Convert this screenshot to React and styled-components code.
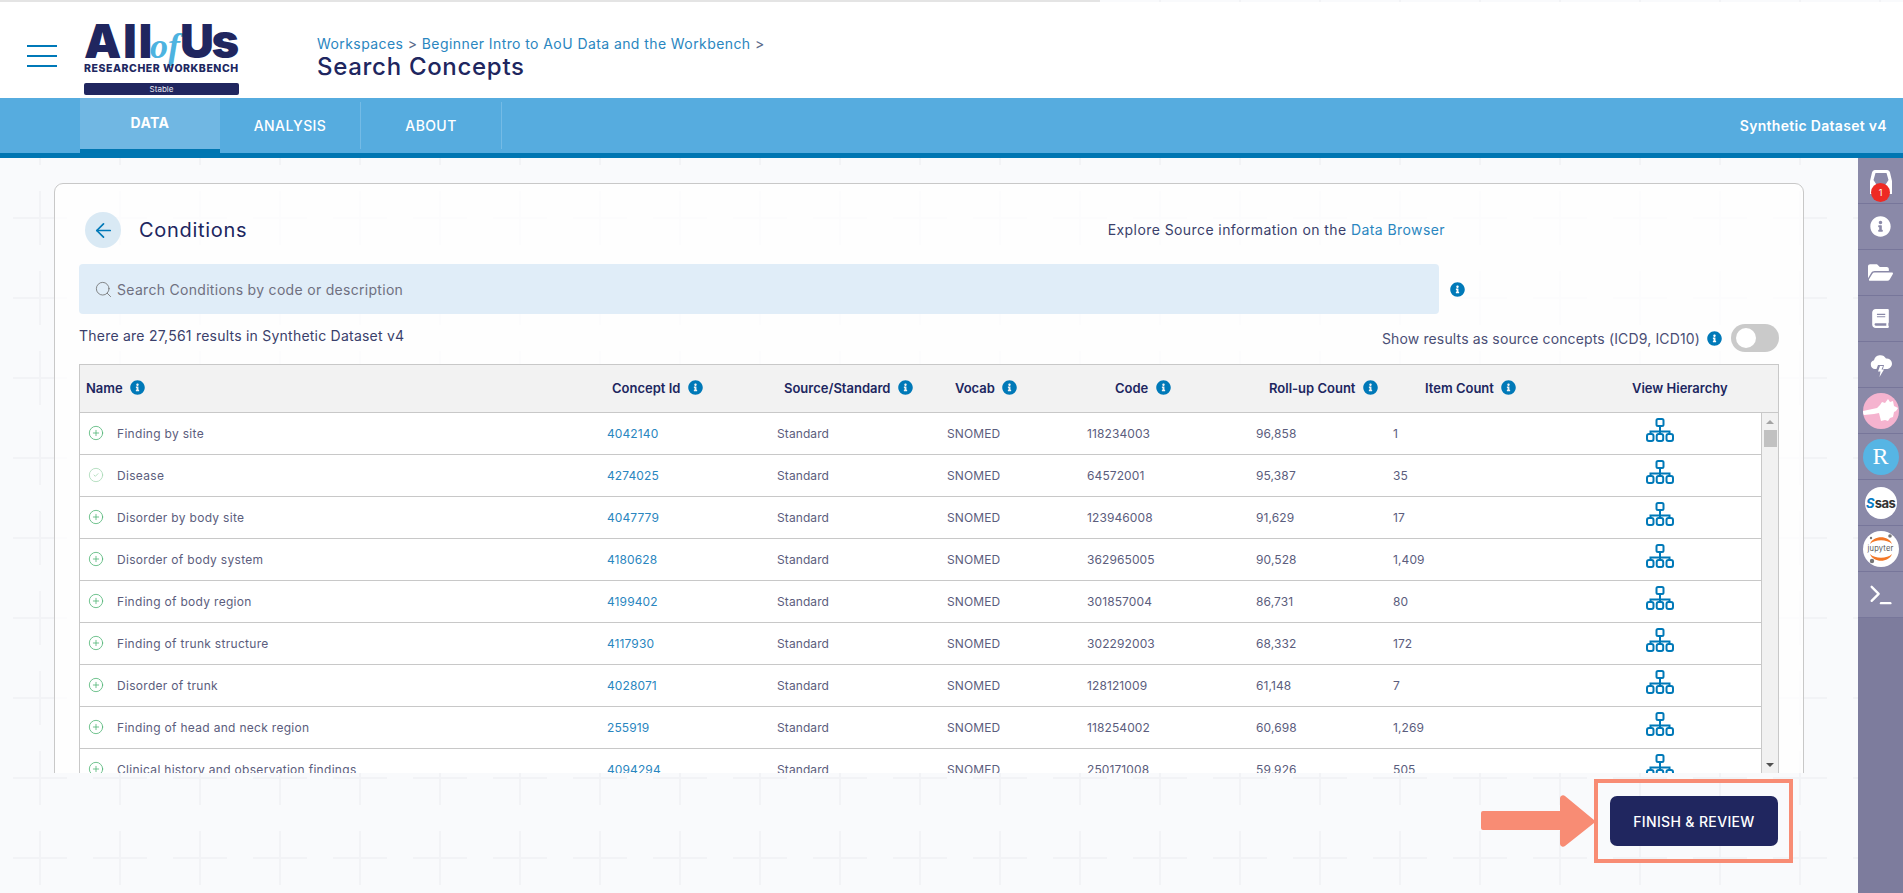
import styled, { createGlobalStyle } from "styled-components";
import { ArrowLeft, CircleCheck, CirclePlus, Search, Terminal } from "lucide-react";
import { FaBook, FaFolderOpen, FaInfoCircle } from "react-icons/fa";

const crossTile = encodeURIComponent(
  `<svg xmlns="http://www.w3.org/2000/svg" width="80" height="80"><path d="M40 13v54M13 40h54" stroke="#f2f3f6" stroke-width="2"/></svg>`
);

const rows = [
  ["Finding by site", "4042140", "118234003", "96,858", "1"],
  ["Disease", "4274025", "64572001", "95,387", "35", true],
  ["Disorder by body site", "4047779", "123946008", "91,629", "17"],
  ["Disorder of body system", "4180628", "362965005", "90,528", "1,409"],
  ["Finding of body region", "4199402", "301857004", "86,731", "80"],
  ["Finding of trunk structure", "4117930", "302292003", "68,332", "172"],
  ["Disorder of trunk", "4028071", "128121009", "61,148", "7"],
  ["Finding of head and neck region", "255919", "118254002", "60,698", "1,269"],
  ["Clinical history and observation findings", "4094294", "250171008", "59,926", "505"],
];

const columns = ["Name", "Concept Id", "Source/Standard", "Vocab", "Code", "Roll-up Count", "Item Count"];

function Hierarchy() {
  return (
    <svg width="28" height="24" viewBox="0 0 28 24" fill="none" stroke="#0079b8" strokeWidth="2">
      <rect x="10.5" y="1" width="7" height="7" rx="1.5" />
      <path d="M14 8v6M4.5 16v-2.5h19V16" />
      <path d="M14 13.5V16" />
      <rect x="1" y="16" width="6.5" height="7" rx="2" />
      <rect x="10.7" y="16" width="6.5" height="7" rx="2" />
      <rect x="20.5" y="16" width="6.5" height="7" rx="2" />
    </svg>
  );
}

function App() {
  return (
    <Page>
      <GlobalStyle />
      <TopLine />
      <Header>
        <Hamburger>
          <span />
          <span />
          <span />
        </Hamburger>
        <Logo>
          <LogoMark>
            <LogoAll>All</LogoAll>
            <LogoOf>of</LogoOf>
            <LogoUs>Us</LogoUs>
          </LogoMark>
          <LogoSub>RESEARCHER WORKBENCH</LogoSub>
          <LogoTag>Stable</LogoTag>
        </Logo>
        <Titles>
          <Breadcrumb>
            Workspaces <Sep>&gt;</Sep> Beginner Intro to AoU Data and the Workbench <Sep>&gt;</Sep>
          </Breadcrumb>
          <PageTitle>Search Concepts</PageTitle>
        </Titles>
      </Header>
      <Nav>
        <Tab $active>DATA</Tab>
        <Tab>ANALYSIS</Tab>
        <Tab>ABOUT</Tab>
        <DatasetName>Synthetic Dataset v4</DatasetName>
      </Nav>
      <Body>
        <Main>
          <CardClip>
            <Card>
              <CardTop>
                <BackButton>
                  <ArrowLeft size={23} strokeWidth={1.8} color="#0079b8" />
                </BackButton>
                <CardTitle>Conditions</CardTitle>
                <Explore>
                  Explore Source information on the <ExploreLink>Data Browser</ExploreLink>
                </Explore>
              </CardTop>
              <SearchRow>
                <SearchBox>
                  <Search size={19} strokeWidth={1} color="#6b6b6b" />
                  <SearchText>Search Conditions by code or description</SearchText>
                </SearchBox>
                <InfoIcon />
              </SearchRow>
              <ResultRow>
                <ResultText>There are 27,561 results in Synthetic Dataset v4</ResultText>
                <ToggleLabel>Show results as source concepts (ICD9, ICD10)</ToggleLabel>
                <InfoIcon />
                <Toggle>
                  <Knob />
                </Toggle>
              </ResultRow>
              <Table>
                <HeadRow>
                  {columns.map((name) => (
                    <HeadCell key={name}>
                      {name} <InfoIcon />
                    </HeadCell>
                  ))}
                  <HeadCell>View Hierarchy</HeadCell>
                </HeadRow>
                <TableBody>
                  <RowList>
                    {rows.map(([name, id, code, count, items, added]) => (
                      <Row key={id}>
                        <NameCell>
                          {added ? (
                            <CircleCheck size={16} strokeWidth={1.2} color="#a6d8b4" />
                          ) : (
                            <CirclePlus size={16} strokeWidth={1.2} color="#4eb474" />
                          )}
                          {name}
                        </NameCell>
                        <IdCell>{id}</IdCell>
                        <Cell>Standard</Cell>
                        <Cell>SNOMED</Cell>
                        <Cell>{code}</Cell>
                        <Cell>{count}</Cell>
                        <Cell>{items}</Cell>
                        <IconCell>
                          <Hierarchy />
                        </IconCell>
                      </Row>
                    ))}
                  </RowList>
                  <Scrollbar>
                    <ArrowUp />
                    <Thumb />
                    <ArrowDown />
                  </Scrollbar>
                </TableBody>
              </Table>
            </Card>
          </CardClip>
          <Footer>
            <svg width="116" height="54" viewBox="0 0 116 54">
              <path
                d="M3 17h77V4a3 3 0 0 1 5-2l29 24a2 2 0 0 1 0 3L85 52a3 3 0 0 1-5-2V36H3a2 2 0 0 1-2-2V19a2 2 0 0 1 2-2z"
                fill="#f88c74"
              />
            </svg>
            <FinishFrame>
              <FinishButton>FINISH &amp; REVIEW</FinishButton>
            </FinishFrame>
          </Footer>
        </Main>
        <Sidebar>
          <SideItem>
            <CartIcon width="22" height="26" viewBox="0 0 22 26">
              <path
                fillRule="evenodd"
                d="M5 0h12c1.500 0 2.500 1 3 2.500L22 11v13H0V11l2-8.500C2.500 1 3.500 0 5 0zm0.500 3L3.500 10 8 17h6l4.500-7-2-7z"
                fill="#fff"
              />
            </CartIcon>
            <Badge>1</Badge>
          </SideItem>
          <SideItem>
            <FaInfoCircle size={21} color="#fff" />
          </SideItem>
          <SideItem>
            <FaFolderOpen size={25} color="#fff" />
          </SideItem>
          <SideItem>
            <FaBook size={19} color="#fff" />
          </SideItem>
          <SideItem>
            <svg width="24" height="24" viewBox="0 0 24 24">
              <path
                d="M6 16a4.500 4.500 0 0 1-1-8.800A6.500 6.500 0 0 1 17 5.500a5 5 0 0 1 1.500 10.400L17 16h-3l1-4H9l-1.500 4z"
                fill="#fff"
              />
              <path d="M11 13h3l-1.500 3.500H15L10.500 24l1-5.500H9z" fill="#fff" />
            </svg>
          </SideItem>
          <SideItem>
            <AppCircle $bg="#f5b3cf" $size={36}>
              <svg width="36" height="36" viewBox="0 0 36 36">
                <path
                  d="M0 18l14-3 3-3 2-3 3 1 3-4 2 3 3-1 1 5 4 2-2 3-2 1-1 5-3 1-2 3-3-1-4 1-1-4-1-4-5 1-10 1-2-2z"
                  fill="#fff"
                />
              </svg>
            </AppCircle>
          </SideItem>
          <SideItem>
            <AppCircle $bg="#56b5e4" $size={36}>
              <RLetter>R</RLetter>
            </AppCircle>
          </SideItem>
          <SideItem>
            <AppCircle $bg="#fff" $size={32}>
              <SasMark>
                <SasS>S</SasS>sas
              </SasMark>
            </AppCircle>
          </SideItem>
          <SideItem>
            <AppCircle $bg="#fff" $size={36}>
              <svg width="36" height="36" viewBox="0 0 36 36">
                <path d="M7 13C10 4 26 4 29 13 24 8 12 8 7 13z" fill="#f37726" />
                <path d="M7 23C10 32 26 32 29 23 24 28 12 28 7 23z" fill="#f37726" />
                <circle cx="27" cy="5" r="1.8" fill="#767677" />
                <circle cx="8" cy="7" r="1.2" fill="#767677" />
                <circle cx="9" cy="30" r="2.2" fill="#767677" />
              </svg>
              <JupyterText>jupyter</JupyterText>
            </AppCircle>
          </SideItem>
          <SideItem>
            <Terminal size={28} color="#fff" strokeWidth={2} />
          </SideItem>
        </Sidebar>
      </Body>
    </Page>
  );
}

const GlobalStyle = createGlobalStyle`
  html, body {
    margin: 0;
    height: 100%;
    overflow: hidden;
    font-family: "Inter", "Liberation Sans", sans-serif;
  }
  * {
    box-sizing: border-box;
  }
`;
const Page = styled.div`
  height: 893px;
  display: flex;
  flex-direction: column;
  background-color: #f9fafc;
  background-image: url("data:image/svg+xml,${crossTile}");
  background-position: 0 18px;
`;
const TopLine = styled.div`
  width: 1100px;
  height: 2px;
  background: #e4e4e4;
`;
const Header = styled.header`
  height: 96px;
  background: white;
  display: flex;
  align-items: flex-start;
`;
const Hamburger = styled.div`
  width: 30px;
  margin: 43px 0 0 27px;
  display: flex;
  flex-direction: column;
  gap: 8px;
  span {
    height: 2px;
    background: #0079b8;
  }
`;
const Logo = styled.div`
  width: 155px;
  margin: 19px 0 0 27px;
  display: flex;
  flex-direction: column;
  color: #20265f;
`;
const LogoMark = styled.div`
  height: 40px;
  display: flex;
  align-items: baseline;
  font-size: 47px;
  line-height: 40px;
  font-weight: 900;
  white-space: nowrap;
`;
const LogoAll = styled.span`
  width: 66px;
  letter-spacing: 1.6px;
`;
const LogoUs = styled.span`
  letter-spacing: -2.4px;
`;
const LogoOf = styled.span`
  width: 30px;
  font-family: "Liberation Serif", serif;
  font-style: italic;
  font-weight: 700;
  font-size: 36px;
  text-align: center;
  color: #4db3e0;
`;
const LogoSub = styled.div`
  margin-top: 2px;
  font-size: 10.5px;
  line-height: 11px;
  font-weight: 800;
  letter-spacing: 0.55px;
  white-space: nowrap;
`;
const LogoTag = styled.div`
  margin-top: 9px;
  height: 12px;
  border-radius: 2px;
  background: #20265f;
  color: #e6e6ee;
  font-size: 8px;
  line-height: 12px;
  text-align: center;
`;
const Titles = styled.div`
  margin: 33px 0 0 78px;
`;
const Breadcrumb = styled.div`
  font-size: 14px;
  line-height: 18px;
  letter-spacing: 0.42px;
  color: #2a86c0;
`;
const Sep = styled.span`
  color: #5a6a8a;
`;
const PageTitle = styled.h1`
  margin: 0;
  font-size: 24px;
  line-height: 28px;
  font-weight: 500;
  letter-spacing: 0.7px;
  color: #20265f;
`;
const Nav = styled.nav`
  height: 60px;
  padding-left: 80px;
  display: flex;
  background: #56acdf;
  border-bottom: 5px solid #0076b2;
`;
const Tab = styled.div`
  width: ${(p) => (p.$active ? "140px" : "141px")};
  display: flex;
  align-items: center;
  justify-content: center;
  font-size: 14px;
  letter-spacing: 0.4px;
  font-weight: ${(p) => (p.$active ? 700 : 500)};
  color: white;
  background: ${(p) => (p.$active ? "#70b7e3" : "transparent")};
  box-shadow: ${(p) => (p.$active ? "inset 0 -4px 0 #0076b2" : "none")};
  border-right: ${(p) => (p.$active ? "none" : "1px solid #74bbe6")};
  margin-top: ${(p) => (p.$active ? "0" : "4px")};
  margin-bottom: ${(p) => (p.$active ? "0" : "4px")};
  padding-bottom: ${(p) => (p.$active ? "7px" : "0")};
`;
const DatasetName = styled.div`
  margin-left: auto;
  padding-right: 16px;
  display: flex;
  align-items: center;
  font-size: 14px;
  font-weight: 600;
  letter-spacing: 0.3px;
  color: white;
`;
const Body = styled.div`
  flex: 1;
  min-height: 0;
  display: flex;
`;
const Main = styled.main`
  flex: 1;
  min-width: 0;
  display: flex;
  flex-direction: column;
`;
const CardClip = styled.div`
  height: 615px;
  padding: 25px 54px 0 54px;
  overflow: hidden;
`;
const Card = styled.section`
  height: 640px;
  padding: 28px 24px 0 24px;
  border: 1px solid #c8c8c8;
  border-radius: 9px;
  background: rgba(255, 255, 255, 0.75);
`;
const CardTop = styled.div`
  height: 36px;
  padding-left: 6px;
  display: flex;
  align-items: center;
`;
const BackButton = styled.div`
  width: 36px;
  height: 36px;
  border-radius: 50%;
  background: #d9e9f4;
  display: flex;
  align-items: center;
  justify-content: center;
`;
const CardTitle = styled.h2`
  margin: 0 0 0 18px;
  font-size: 20px;
  font-weight: 400;
  letter-spacing: 0.7px;
  color: #20265f;
`;
const Explore = styled.div`
  margin-left: auto;
  margin-right: 334px;
  margin-bottom: 1px;
  font-size: 14px;
  letter-spacing: 0.42px;
  color: #3a3f6b;
`;
const ExploreLink = styled.span`
  color: #2a86c0;
`;
const SearchRow = styled.div`
  margin-top: 16px;
  display: flex;
  align-items: center;
  gap: 7px;
`;
const SearchBox = styled.div`
  width: 1360px;
  height: 50px;
  padding-left: 15px;
  border-radius: 4px;
  background: #e0edf8;
  display: flex;
  align-items: center;
  gap: 4px;
`;
const SearchText = styled.span`
  font-size: 14px;
  letter-spacing: 0.3px;
  color: #6f7080;
`;
const InfoIcon = styled(FaInfoCircle)`
  flex: none;
  width: 15px;
  height: 15px;
  margin-left: 4px;
  color: #0079b8;
  vertical-align: -2px;
`;
const ResultRow = styled.div`
  height: 28px;
  margin-top: 10px;
  display: flex;
  align-items: center;
`;
const ResultText = styled.span`
  margin-right: auto;
  margin-bottom: 6px;
  font-size: 14px;
  letter-spacing: 0.23px;
  color: #3a3f6b;
`;
const ToggleLabel = styled.span`
  font-size: 14px;
  letter-spacing: 0.14px;
  color: #4a4e75;
  margin-right: 3px;
`;
const Toggle = styled.div`
  width: 48px;
  height: 28px;
  margin-left: 9px;
  padding: 4px 5px;
  border-radius: 14px;
  background: #cacaca;
`;
const Knob = styled.div`
  width: 20px;
  height: 20px;
  border-radius: 50%;
  background: white;
`;
const Table = styled.div`
  margin-top: 12px;
  border: 1px solid #c8c8c8;
  border-bottom: none;
  background: white;
`;
const HeadRow = styled.div`
  height: 48px;
  padding: 0 0 2px 6px;
  display: grid;
  grid-template-columns: 526px 172px 171px 160px 154px 156px 207px 1fr;
  align-items: center;
  background: #f2f2f2;
  border-bottom: 1px solid #c8c8c8;
`;
const HeadCell = styled.div`
  font-size: 13px;
  font-weight: 600;
  color: #20265f;
  white-space: nowrap;
`;
const TableBody = styled.div`
  display: flex;
`;
const RowList = styled.div`
  flex: 1;
  min-width: 0;
`;
const Row = styled.div`
  height: 42px;
  padding: 0 0 1px 8px;
  display: grid;
  grid-template-columns: 519px 170px 170px 140px 169px 137px 220px 94px;
  align-items: center;
  border-bottom: 1px solid #c8c8c8;
`;
const Cell = styled.div`
  font-size: 12px;
  letter-spacing: 0.1px;
  color: #5b5d7d;
  white-space: nowrap;
`;
const NameCell = styled(Cell)`
  display: flex;
  align-items: center;
  gap: 13px;
  letter-spacing: 0.3px;
`;
const IdCell = styled(Cell)`
  color: #2a86c0;
`;
const IconCell = styled.div`
  display: flex;
  justify-content: center;
  align-items: center;
  margin-bottom: 6px;
`;
const Scrollbar = styled.div`
  flex: none;
  width: 17px;
  height: 360px;
  position: relative;
  background: #f1f1f1;
  border-left: 1px solid #c8c8c8;
`;
const Thumb = styled.div`
  position: absolute;
  top: 17px;
  left: 2px;
  width: 13px;
  height: 17px;
  background: #c1c1c1;
`;
const ArrowUp = styled.div`
  position: absolute;
  top: 7px;
  left: 4px;
  border: 4px solid transparent;
  border-top: none;
  border-bottom: 4px solid #a3a3a3;
`;
const ArrowDown = styled.div`
  position: absolute;
  top: 350px;
  left: 4px;
  border: 4px solid transparent;
  border-bottom: none;
  border-top: 4px solid #505050;
`;
const Footer = styled.div`
  padding-top: 6px;
  padding-right: 65px;
  display: flex;
  justify-content: flex-end;
  align-items: center;
`;
const FinishFrame = styled.div`
  width: 199px;
  height: 84px;
  margin-left: -2px;
  border: 4px solid #f88c74;
  display: flex;
  align-items: center;
  justify-content: center;
`;
const FinishButton = styled.button`
  width: 168px;
  height: 50px;
  margin-left: 1px;
  border: none;
  border-radius: 7px;
  background: #20265f;
  color: white;
  font-family: inherit;
  font-size: 14px;
  font-weight: 500;
  letter-spacing: 0.35px;
`;
const Sidebar = styled.aside`
  flex: none;
  width: 45px;
  background: #7d7c9d;
`;
const SideItem = styled.div`
  height: 46px;
  position: relative;
  display: flex;
  align-items: center;
  justify-content: center;
  background: #8a89a8;
  border-bottom: 1px solid #77769a;
`;
const CartIcon = styled.svg`
  margin-top: 4px;
`;
const Badge = styled.span`
  position: absolute;
  top: 25px;
  left: 13px;
  width: 19px;
  height: 19px;
  border-radius: 50%;
  background: #ee2a24;
  color: white;
  font-size: 9px;
  line-height: 19px;
  text-align: center;
`;
const AppCircle = styled.div`
  width: ${(p) => p.$size}px;
  height: ${(p) => p.$size}px;
  border-radius: 50%;
  background: ${(p) => p.$bg};
  position: relative;
  display: flex;
  align-items: center;
  justify-content: center;
  overflow: hidden;
`;
const RLetter = styled.span`
  font-family: "Liberation Serif", serif;
  font-size: 24px;
  color: white;
`;
const SasMark = styled.span`
  font-size: 13px;
  font-weight: 700;
  letter-spacing: -0.6px;
  color: #333;
`;
const SasS = styled.span`
  font-style: italic;
  color: #0a7cc4;
  margin-right: 1px;
`;
const JupyterText = styled.span`
  position: absolute;
  top: 13px;
  left: 0;
  right: 0;
  text-align: center;
  font-size: 7.5px;
  letter-spacing: 0.2px;
  color: #555;
`;

export default App;
